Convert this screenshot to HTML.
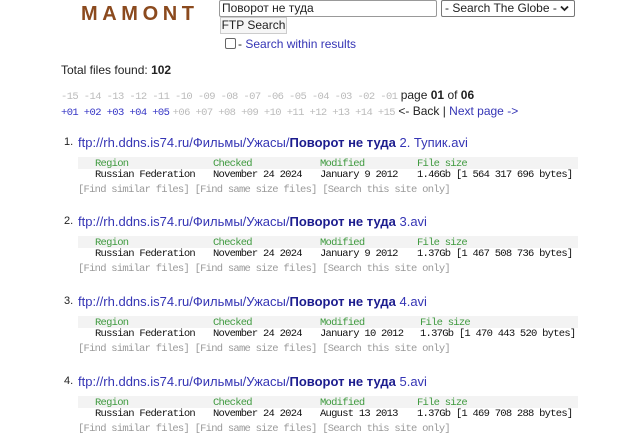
<!DOCTYPE html>
<html><head><meta charset="utf-8"><style>
body{margin:0;width:640px;height:434px;background:#fff;position:relative;overflow:hidden;font-family:"Liberation Sans","Noto Sans CJK SC",sans-serif;font-size:12px;color:#222}
.a{position:absolute;white-space:nowrap}
.logo{left:81px;top:3px;font-size:20px;font-weight:bold;color:#8b4a1e;letter-spacing:4.6px}
.inp{left:219px;top:0;width:218px;height:17px;border:1px solid #999;box-sizing:border-box;font-size:12px;line-height:15px;padding-left:2px;border-radius:2px}
.sel{left:441px;top:0;width:134px;height:17px;border:1px solid #777;box-sizing:border-box;font-size:12px;line-height:15px;padding-left:3px;border-radius:2px}
.btn{left:220px;top:17px;width:67px;height:17px;border:1px solid #ccc;background:#f6f6f6;box-sizing:border-box;font-size:12px;line-height:15px;text-align:center}
.cb{left:225px;top:38px;width:9px;height:9px;border:1px solid #666;border-radius:2px}
.blue{color:#3535b5}
.m{font-family:"Liberation Mono",monospace;font-size:10.5px;letter-spacing:-0.75px;color:#111}
.p{font-family:"Liberation Mono",monospace;font-size:10.5px;letter-spacing:-0.6px}
.g{color:#bbb}
.t{font-size:13px;color:#3535b5}
.t b{color:#1c1c8e}
.hd{left:78px;width:500px;height:12px;background:#f3f3f3}
.gr{color:#3f9a3f}
.lk{color:#999}
</style></head><body>
<div class="a logo">MAMONT</div>
<div class="a inp">Поворот не туда</div>
<div class="a sel">- Search The Globe -<svg style="position:absolute;right:5px;top:4px" width="9" height="7" viewBox="0 0 9 7"><path d="M1 1.5L4.5 5L8 1.5" fill="none" stroke="#222" stroke-width="1.8"/></svg></div>
<div class="a btn">FTP Search</div>
<div class="a cb"></div>
<div class="a" style="left:238px;top:37px">- <span class="blue">Search within results</span></div>
<div class="a" style="left:61px;top:63px">Total files found: <b>102</b></div>
<div class="a" style="left:61px;top:88px"><span class="p g">-15 -14 -13 -12 -11 -10 -09 -08 -07 -06 -05 -04 -03 -02 -01</span> page <b>01</b> of <b>06</b></div>
<div class="a" style="left:61px;top:104px"><span class="p" style="color:#3535c5">+01 +02 +03 +04 +05</span> <span class="p g">+06 +07 +08 +09 +10 +11 +12 +13 +14 +15</span> &lt;- Back | <span class="blue">Next page -&gt;</span></div>

<div class="a" style="left:64px;top:136px;font-size:11px">1.</div>
<div class="a t" style="left:78px;top:135px">ftp://rh.ddns.is74.ru/Фильмы/Ужасы/<b>Поворот не туда</b> 2. Тупик.avi</div>
<div class="a hd" style="top:157px"></div>
<div class="a m gr" style="left:95px;top:158px">Region<span style="position:absolute;left:118px">Checked</span><span style="position:absolute;left:225px">Modified</span><span style="position:absolute;left:322px">File size</span></div>
<div class="a m" style="left:95px;top:169px">Russian Federation<span style="position:absolute;left:118px">November 24 2024</span><span style="position:absolute;left:225px">January 9 2012</span><span style="position:absolute;left:322px">1.46Gb [1 564 317 696 bytes]</span></div>
<div class="a m lk" style="left:78px;top:184px">[Find similar files] [Find same size files] [Search this site only]</div>

<div class="a" style="left:64px;top:215px;font-size:11px">2.</div>
<div class="a t" style="left:78px;top:214px">ftp://rh.ddns.is74.ru/Фильмы/Ужасы/<b>Поворот не туда</b> 3.avi</div>
<div class="a hd" style="top:236px"></div>
<div class="a m gr" style="left:95px;top:237px">Region<span style="position:absolute;left:118px">Checked</span><span style="position:absolute;left:225px">Modified</span><span style="position:absolute;left:322px">File size</span></div>
<div class="a m" style="left:95px;top:248px">Russian Federation<span style="position:absolute;left:118px">November 24 2024</span><span style="position:absolute;left:225px">January 9 2012</span><span style="position:absolute;left:322px">1.37Gb [1 467 508 736 bytes]</span></div>
<div class="a m lk" style="left:78px;top:263px">[Find similar files] [Find same size files] [Search this site only]</div>

<div class="a" style="left:64px;top:295px;font-size:11px">3.</div>
<div class="a t" style="left:78px;top:294px">ftp://rh.ddns.is74.ru/Фильмы/Ужасы/<b>Поворот не туда</b> 4.avi</div>
<div class="a hd" style="top:316px"></div>
<div class="a m gr" style="left:95px;top:317px">Region<span style="position:absolute;left:118px">Checked</span><span style="position:absolute;left:225px">Modified</span><span style="position:absolute;left:325px">File size</span></div>
<div class="a m" style="left:95px;top:328px">Russian Federation<span style="position:absolute;left:118px">November 24 2024</span><span style="position:absolute;left:225px">January 10 2012</span><span style="position:absolute;left:325px">1.37Gb [1 470 443 520 bytes]</span></div>
<div class="a m lk" style="left:78px;top:343px">[Find similar files] [Find same size files] [Search this site only]</div>

<div class="a" style="left:64px;top:375px;font-size:11px">4.</div>
<div class="a t" style="left:78px;top:374px">ftp://rh.ddns.is74.ru/Фильмы/Ужасы/<b>Поворот не туда</b> 5.avi</div>
<div class="a hd" style="top:396px"></div>
<div class="a m gr" style="left:95px;top:397px">Region<span style="position:absolute;left:118px">Checked</span><span style="position:absolute;left:225px">Modified</span><span style="position:absolute;left:322px">File size</span></div>
<div class="a m" style="left:95px;top:408px">Russian Federation<span style="position:absolute;left:118px">November 24 2024</span><span style="position:absolute;left:225px">August 13 2013</span><span style="position:absolute;left:322px">1.37Gb [1 469 708 288 bytes]</span></div>
<div class="a m lk" style="left:78px;top:423px">[Find similar files] [Find same size files] [Search this site only]</div>
</body></html>
